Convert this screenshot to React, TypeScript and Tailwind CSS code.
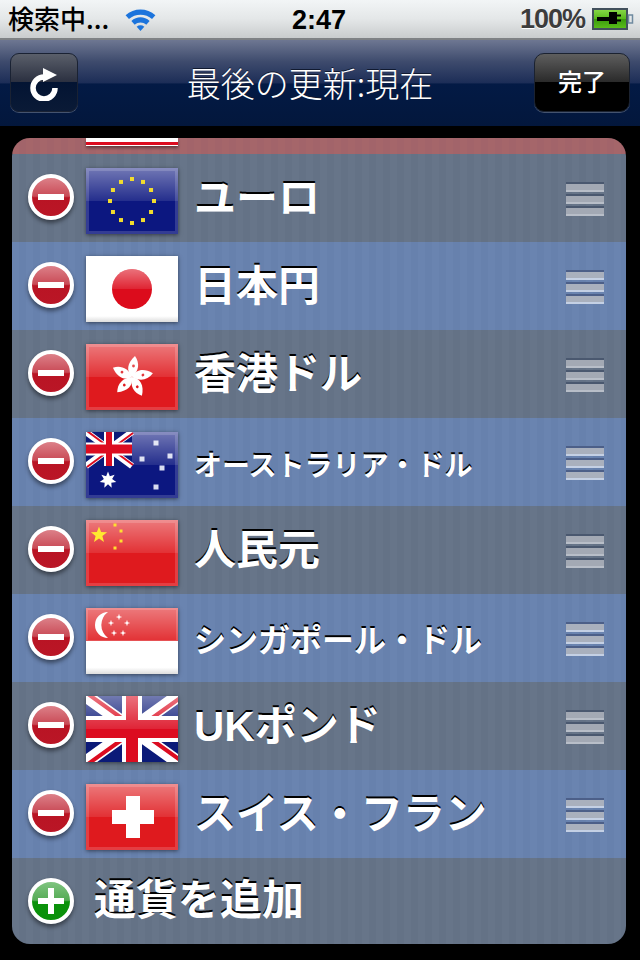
import React from "react";

const Gloss = ({ border = true }: { border?: boolean }) => (
  <>
    <rect x="0" y="0" width="92" height="33" fill="url(#gloss)" />
    {border && <rect x="1.5" y="1.5" width="89" height="63" fill="none" stroke="#fff" strokeOpacity="0.16" strokeWidth="3" />}
  </>
);

const Union = ({ w, h }: { w: number; h: number }) => {
  const t = w / 92;
  return (
    <g>
      <rect width={w} height={h} fill="#0b1a78" />
      <path d={`M0 0L${w} ${h}M${w} 0L0 ${h}`} stroke="#fff" strokeWidth={13 * t} />
      <path d={`M0 0L${w / 2} ${h / 2}M${w} ${h}L${w / 2} ${h / 2}`} stroke="#dc0c20" strokeWidth={4 * t} transform={`translate(${2 * t} ${-2 * t})`} />
      <path d={`M${w} 0L${w / 2} ${h / 2}M0 ${h}L${w / 2} ${h / 2}`} stroke="#dc0c20" strokeWidth={4 * t} transform={`translate(${2 * t} ${2 * t})`} />
      <rect x={w / 2 - 10 * t} width={20 * t} height={h} fill="#fff" />
      <rect y={h / 2 - 13 * t} width={w} height={26 * t} fill="#fff" />
      <rect x={w / 2 - 6 * t} width={12 * t} height={h} fill="#dc0c20" />
      <rect y={h / 2 - 9 * t} width={w} height={18 * t} fill="#dc0c20" />
    </g>
  );
};

const starPoints = (cx: number, cy: number, r: number, n = 5, inner = 0.42) => {
  const p: string[] = [];
  for (let i = 0; i < n * 2; i++) {
    const a = (Math.PI * i) / n - Math.PI / 2;
    const rr = i % 2 ? r * inner : r;
    p.push(`${cx + rr * Math.cos(a)},${cy + rr * Math.sin(a)}`);
  }
  return p.join(" ");
};

const flags: Record<string, React.ReactNode> = {
  eu: (
    <>
      <rect width="92" height="66" fill="#0c1780" />
      <Gloss />
      <g className="blur-[0.5px]">
        {Array.from({ length: 12 }).map((_, i) => {
          const a = (i * Math.PI) / 6;
          return <rect key={i} x={46 + 22 * Math.sin(a) - 2} y={33 - 22 * Math.cos(a) - 2} width="4" height="4" fill="#f2dc2e" />;
        })}
      </g>
    </>
  ),
  jp: (
    <>
      <rect width="92" height="66" fill="#ffffff" />
      <circle cx="46" cy="33" r="20" fill="#dc0c1c" />
      <path d="M26 33A20 20 0 0 1 66 33Z" fill="url(#gloss)" />
      <rect y="60" width="92" height="6" fill="url(#fade)" />
    </>
  ),
  hk: (
    <>
      <rect width="92" height="66" fill="#df1a1e" />
      <g className="blur-[0.5px]">
        {[0, 72, 144, 216, 288].map((r) => (
          <g key={r} transform={`rotate(${r} 46 33)`}>
            <path d="M46 33C40 27 41 19 49 12C54 19 53 27 46 33Z" fill="#fff" />
            <circle cx="47.5" cy="22" r="1.4" fill="#df1a1e" />
          </g>
        ))}
      </g>
      <Gloss />
    </>
  ),
  au: (
    <>
      <rect width="92" height="66" fill="#0c1780" />
      <g className="blur-[0.4px]">
        <polygon points={starPoints(22, 48, 8.5, 7, 0.5)} fill="#fff" />
        {[[70, 11], [56, 27], [84, 24], [76, 36], [70, 55]].map(([x, y], i) => (
          <rect key={i} x={x - 2.5} y={y - 2.5} width="5" height="5" fill="#d8dcf0" />
        ))}
      </g>
      <Gloss />
      <Union w={46} h={34} />
    </>
  ),
  cn: (
    <>
      <rect width="92" height="66" fill="#df1a1e" />
      <Gloss />
      <g className="blur-[0.4px]">
        <polygon points={starPoints(13, 15, 8.5)} fill="#ffe830" />
        {[[29, 5], [35, 11], [35, 21], [29, 28]].map(([x, y], i) => (
          <rect key={i} x={x - 1.5} y={y - 1.5} width="3" height="3" fill="#ffe030" />
        ))}
      </g>
    </>
  ),
  sg: (
    <>
      <rect width="92" height="33" fill="#df1a1e" />
      <rect y="33" width="92" height="33" fill="#ffffff" />
      <rect y="33" width="92" height="33" fill="url(#fade2)" />
      <Gloss border={false} />
      <g className="blur-[0.4px]">
        <path d="M22 4A13 13 0 0 0 22 30A16 16 0 0 1 22 4Z" fill="#fff" />
        {[[33, 9], [25, 15], [41, 15], [28, 25], [37, 25]].map(([x, y], i) => (
          <polygon key={i} points={starPoints(x, y, 3.2, 4, 0.35)} fill="#fff" />
        ))}
      </g>
      <rect x="1" y="1" width="90" height="32" fill="none" stroke="#fff" strokeOpacity="0.16" strokeWidth="2" />
    </>
  ),
  uk: (
    <>
      <Union w={92} h={66} />
      <rect y="0" width="92" height="33" fill="url(#gloss)" />
    </>
  ),
  ch: (
    <>
      <rect width="92" height="66" fill="#df1a1e" />
      <Gloss />
      <rect x="40" y="12" width="14" height="42" fill="#fff" />
      <rect x="26" y="26" width="42" height="14" fill="#fff" />
    </>
  ),
};

const Flag = ({ code }: { code: string }) => (
  <div className="w-[92px] h-[66px] shrink-0 shadow-[0_1px_4px_rgba(0,0,0,0.5)]">
    <svg width="92" height="66" viewBox="0 0 92 66" className="block">
      <defs>
        <linearGradient id="gloss" x1="0" y1="0" x2="0" y2="1">
          <stop offset="0" stopColor="#fff" stopOpacity="0.42" />
          <stop offset="1" stopColor="#fff" stopOpacity="0.1" />
        </linearGradient>
        <linearGradient id="fade" x1="0" y1="0" x2="0" y2="1">
          <stop offset="0" stopColor="#ddd" stopOpacity="0" />
          <stop offset="1" stopColor="#ddd" stopOpacity="1" />
        </linearGradient>
        <linearGradient id="fade2" x1="0" y1="0.8" x2="0" y2="1">
          <stop offset="0" stopColor="#ddd" stopOpacity="0" />
          <stop offset="1" stopColor="#ddd" stopOpacity="1" />
        </linearGradient>
      </defs>
      {flags[code]}
    </svg>
  </div>
);

const RoundBtn = ({ add }: { add?: boolean }) => (
  <div
    className={`relative w-[46px] h-[46px] shrink-0 rounded-full border-[4px] border-white shadow-[0_3px_4px_rgba(0,0,0,0.45)] flex items-center justify-center ${
      add
        ? "bg-[linear-gradient(180deg,#7fc47f_0%,#55ab55_48%,#0a920a_52%,#0a900a_100%)]"
        : "bg-[linear-gradient(180deg,#dc8088_0%,#c94a56_48%,#b91424_52%,#ba1626_100%)]"
    }`}
  >
    <div className="w-[26px] h-[6px] bg-white" />
    {add && <div className="absolute w-[6px] h-[26px] bg-white" />}
  </div>
);

const Bar = ({ blue }: { blue: boolean }) => (
  <div
    className={`w-[38px] h-[10px] border-t-2 border-b-2 ${
      blue ? "border-t-[#4c5f88] border-b-[#c4d0e4] bg-[#a9b0bd]" : "border-t-[#4a586f] border-b-[#b8bec8] bg-[#a3a9b4]"
    }`}
  />
);

const Row = ({ code, name, blue, size }: { code: string; name: string; blue: boolean; size: string }) => (
  <div
    className={`h-[88px] flex items-center pl-4 pr-[22px] ${
      blue
        ? "bg-[repeating-linear-gradient(90deg,#6a84b0_0px,#6a84b0_7px,#6781ad_7px,#6781ad_14px)]"
        : "bg-[repeating-linear-gradient(90deg,#677589_0px,#677589_7px,#647286_7px,#647286_14px)]"
    }`}
  >
    <div className="mb-[2px]">
      <RoundBtn />
    </div>
    <div className="ml-3 mt-[6px]">
      <Flag code={code} />
    </div>
    <div className={`ml-4 flex-1 font-bold text-white whitespace-nowrap ${size} [text-shadow:0_-2px_0_#000]`}>{name}</div>
    <div className="flex flex-col gap-[2px] mt-[2px]">
      <Bar blue={blue} />
      <Bar blue={blue} />
      <Bar blue={blue} />
    </div>
  </div>
);

const rows = [
  { code: "eu", name: "ユーロ", size: "text-[42px] pt-[2px]" },
  { code: "jp", name: "日本円", size: "text-[42px] pt-[2px]" },
  { code: "hk", name: "香港ドル", size: "text-[42px] pt-[2px]" },
  { code: "au", name: "オーストラリア・ドル", size: "text-[28px] pt-[9px]" },
  { code: "cn", name: "人民元", size: "text-[42px] pt-[2px]" },
  { code: "sg", name: "シンガポール・ドル", size: "text-[32px] pt-[6px]" },
  { code: "uk", name: "UKポンド", size: "text-[42px] pt-[2px]" },
  { code: "ch", name: "スイス・フラン", size: "text-[42px] pt-[2px]" },
];

export default function App() {
  return (
    <div className="w-[640px] h-[960px] bg-black overflow-hidden leading-none font-['Liberation_Sans','Noto_Sans_CJK_JP',sans-serif]">
      {/* status bar */}
      <div className="h-10 flex items-center justify-between relative pl-2 pr-[6px] border-b-2 border-b-[#7f8285] bg-[linear-gradient(180deg,#f2f5f6_0%,#e4e7e8_50%,#c9cccd_100%)]">
        <div className="flex items-center">
          <span className="text-[26px] text-black font-medium font-['Noto_Sans_CJK_JP',sans-serif] mb-[2px] whitespace-nowrap">検索中...</span>
          <svg width="33" height="25" viewBox="0 0 34 26" className="ml-[15px]">
            <path d="M1.5 8.5C10 0.5 24 0.5 32.5 8.5L29 12.5C22.5 6.5 11.5 6.5 5 12.5Z" fill="#1c74dc" />
            <path d="M7.5 14.5C13 9.5 21 9.5 26.5 14.5L23 18.5C19.5 15.2 14.5 15.2 11 18.5Z" fill="#1c74dc" />
            <path d="M13 20.5C15.5 18.5 18.5 18.5 21 20.5L17 25Z" fill="#1c74dc" />
          </svg>
        </div>
        <span className="absolute left-[292px] top-[7px] text-[27px] font-bold text-black">2:47</span>
        <div className="flex items-center gap-[7px]">
          <span className="text-[27px] font-bold tracking-[-1px] text-[#3c3c3c] [text-shadow:0_1px_0_#fff]">100%</span>
          <svg width="42" height="22" viewBox="0 0 42 22">
            <defs>
              <linearGradient id="batt" x1="0" y1="0" x2="0" y2="1">
                <stop offset="0" stopColor="#8ad84a" />
                <stop offset="0.5" stopColor="#58b81c" />
                <stop offset="0.52" stopColor="#3a9a0c" />
                <stop offset="1" stopColor="#5cc01c" />
              </linearGradient>
            </defs>
            <rect x="1" y="1" width="34" height="20" fill="url(#batt)" stroke="#42505c" strokeWidth="2" />
            <rect x="36.5" y="7" width="4" height="8" fill="none" stroke="#6f8aa0" strokeWidth="1.5" />
            <path d="M5 9H17V4H25V6.5H29V8.5H25V11.5H29V13.5H25V16H17V13H5Z" fill="#000" />
          </svg>
        </div>
      </div>

      {/* nav bar */}
      <div className="h-[86px] flex items-center justify-between pl-[10px] pr-[10px] pb-[1px] bg-[linear-gradient(180deg,#6e7792_0%,#3e4b6d_25%,#1c2d57_50%,#031a45_51%,#03173c_100%)]">
        <div className="w-[68px] h-[59px] rounded-[9px] border border-[#1a2233] shadow-[0_1px_0_#44536f] flex items-center justify-center bg-[linear-gradient(180deg,#5a5f6a_0%,#2b3040_49%,#031433_50%,#0a1a36_100%)]">
          <svg width="32" height="36" viewBox="0 0 32 36">
            <path d="M27 23A11 11 0 1 1 16 12" fill="none" stroke="#fff" strokeWidth="5.5" />
            <path d="M15 3L29 10L15 17Z" fill="#fff" />
          </svg>
        </div>
        <div className="pl-2 text-[34px] text-white font-light font-['Noto_Sans_CJK_JP',sans-serif] [text-shadow:0_-1px_0_#111a30]">最後の更新:現在</div>
        <div className="w-[96px] h-[59px] rounded-[10px] border border-[#1b2230] shadow-[0_1px_0_#44536f] flex items-center justify-center pb-1 text-[24px] font-medium text-white font-['Noto_Sans_CJK_JP',sans-serif] bg-[linear-gradient(180deg,#5e5e5e_0%,#2a2a2a_49%,#000_50%,#000_100%)]">
          完了
        </div>
      </div>

      {/* panel */}
      <div className="mt-3 ml-3 w-[614px] h-[806px] rounded-[18px] overflow-hidden">
        <div className="h-4 pl-[74px] bg-[repeating-linear-gradient(90deg,#a5666a_0px,#a5666a_7px,#a2646a_7px,#a2646a_14px)]">
          <div className="w-[92px] h-2 border-t-[4px] border-t-white bg-[#dc0c20] border-b border-b-white shadow-[0_2px_3px_rgba(0,0,0,0.4)]" />
        </div>
        {rows.map((r, i) => (
          <Row key={r.code} {...r} blue={i % 2 === 1} />
        ))}
        <div className="h-[86px] flex items-center pl-4 bg-[repeating-linear-gradient(90deg,#677589_0px,#677589_7px,#647286_7px,#647286_14px)]">
          <RoundBtn add />
          <div className="ml-5 text-[42px] font-bold text-white [text-shadow:0_-2px_0_#000]">通貨を追加</div>
        </div>
      </div>
    </div>
  );
}
